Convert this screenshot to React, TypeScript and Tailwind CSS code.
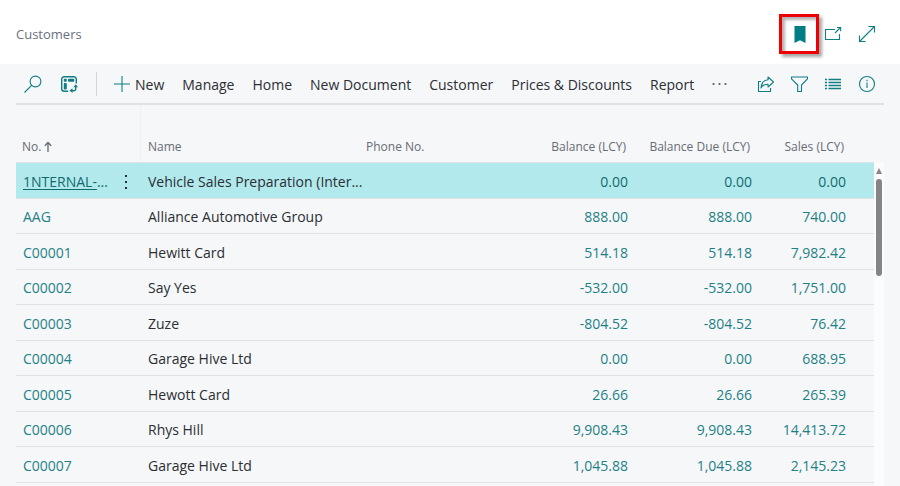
import type { ReactNode } from "react";

type Customer = {
  no: string;
  name: string;
  phone?: string;
  balance: string;
  due: string;
  sales: string;
};

const customers: Customer[] = [
  { no: "1NTERNAL-", name: "Vehicle Sales Preparation (Inter...", balance: "0.00", due: "0.00", sales: "0.00" },
  { no: "AAG", name: "Alliance Automotive Group", balance: "888.00", due: "888.00", sales: "740.00" },
  { no: "C00001", name: "Hewitt Card", balance: "514.18", due: "514.18", sales: "7,982.42" },
  { no: "C00002", name: "Say Yes", balance: "-532.00", due: "-532.00", sales: "1,751.00" },
  { no: "C00003", name: "Zuze", balance: "-804.52", due: "-804.52", sales: "76.42" },
  { no: "C00004", name: "Garage Hive Ltd", balance: "0.00", due: "0.00", sales: "688.95" },
  { no: "C00005", name: "Hewott Card", balance: "26.66", due: "26.66", sales: "265.39" },
  { no: "C00006", name: "Rhys Hill", balance: "9,908.43", due: "9,908.43", sales: "14,413.72" },
  { no: "C00007", name: "Garage Hive Ltd", balance: "1,045.88", due: "1,045.88", sales: "2,145.23" },
];

const menus = ["Manage", "Home", "New Document", "Customer", "Prices & Discounts", "Report"];

function Icon({ children }: { children: ReactNode }) {
  return (
    <svg
      viewBox="0 0 18 18"
      className="size-[18px] shrink-0"
      fill="none"
      stroke="currentColor"
      strokeWidth="1.1"
      aria-hidden="true"
    >
      {children}
    </svg>
  );
}

function IconButton({ label, children }: { label: string; children: ReactNode }) {
  return (
    <button type="button" aria-label={label} className="shrink-0 text-[#0f7f85]">
      <Icon>{children}</Icon>
    </button>
  );
}

function PageHeader() {
  return (
    <header className="flex h-16 items-center bg-white px-4 pt-1">
      <h1 className="grow pt-[2px] text-[13px] text-[#697180]">Customers</h1>
      <button
        type="button"
        aria-label="Bookmark"
        className="mr-[5px] flex size-10 items-center justify-center border-3 border-[#ee0000] text-[#007d85] shadow-[3px_3px_3px_rgba(0,0,0,0.35),inset_3px_3px_3px_rgba(0,0,0,0.3)]"
      >
        <svg viewBox="0 0 18 18" className="size-[18px]" fill="currentColor" aria-hidden="true">
          <path d="M4.5 1h11v17L10 15.2 4.5 18z" />
        </svg>
      </button>
      <div className="mr-2 flex gap-4">
        <IconButton label="Open in new window">
          <path d="M11 4.500H1.500v10h14V9" />
          <path d="M11 8l5.500-5.500M13 2.500h3.700v3.700" />
        </IconButton>
        <IconButton label="Expand">
          <path d="M1.500 16.500l15-15M10.500 1.500h6v6M1.500 10.500v6h6" />
        </IconButton>
      </div>
    </header>
  );
}

function Toolbar() {
  return (
    <div className="flex h-[41px] items-center border-b-2 border-[#dfe1e4] px-2 text-sm text-[#2b2e33]">
      <div className="flex gap-[18px]">
        <IconButton label="Search">
          <circle cx="11.500" cy="6.500" r="5.400" />
          <path d="M7.600 10.400L.5 17.500" />
        </IconButton>
        <IconButton label="Analyze">
          <path
            d="M16.300 8.500V4.200a2.500 2.500 0 0 0-2.500-2.500H4.200a2.500 2.500 0 0 0-2.500 2.500v9.600a2.500 2.500 0 0 0 2.500 2.500H8"
            strokeWidth="1.400"
          />
          <g fill="currentColor" stroke="none">
            <rect x="3.800" y="3.700" width="3" height="3" rx="1" />
            <rect x="8" y="3.700" width="6.300" height="3" rx="1" />
            <rect x="3.800" y="8" width="3" height="6.500" rx="1" />
            <path d="M15.700 9.200l2.300 3h-4.600zM9.500 15.600l3-2.300v4.600z" />
          </g>
          <path d="M15.700 11.500v2.200a2 2 0 0 1-2 2H12" strokeWidth="1.400" />
        </IconButton>
      </div>
      <span className="mr-4 ml-[18px] h-6 w-px bg-[#d3d6da]" />
      <div className="flex grow items-center gap-[18px] pt-[2px] whitespace-nowrap">
        <button type="button" className="flex items-center gap-1">
          <span className="text-[#0f7f85]">
            <Icon>
              <path d="M9 0v16M1 8h16" />
            </Icon>
          </span>
          New
        </button>
        {menus.map((menu) => (
          <button type="button" key={menu}>
            {menu}
          </button>
        ))}
        <button type="button" aria-label="More options">
          <svg viewBox="0 0 18 18" className="size-[18px]" fill="#555b63" aria-hidden="true">
            <circle cx="1.500" cy="8" r="1.100" />
            <circle cx="7.500" cy="8" r="1.100" />
            <circle cx="13.500" cy="8" r="1.100" />
          </svg>
        </button>
      </div>
      <div className="flex gap-4">
        <IconButton label="Share">
          <path d="M5 6.500H2.500v10h12V13" />
          <path d="M12 2l5.500 5-5.500 5V9.200C8.500 9 6.300 10.400 5 13c.2-4.600 2.600-7.800 7-8.200z" strokeLinejoin="round" />
        </IconButton>
        <IconButton label="Filter">
          <path d="M1.500 2h16v1.800l-6 6.200v6.500H7.700V10l-6.200-6.200z" strokeLinejoin="round" />
        </IconButton>
        <IconButton label="List view">
          <path d="M4.500 4.500H17M4.500 7.500H17M4.500 10.500H17M4.500 13.500H17M1 4.500h2M1 7.500h2M1 10.500h2M1 13.500h2" strokeWidth="1.300" />
        </IconButton>
        <IconButton label="Details">
          <circle cx="9" cy="9" r="7.500" />
          <path d="M9 7.500V13M9 4.800v1.400" />
        </IconButton>
      </div>
    </div>
  );
}

function CustomerTable() {
  return (
    <table className="w-full table-fixed border-separate border-spacing-0 text-left text-sm whitespace-nowrap">
      <colgroup>
        <col className="w-[95px]" />
        <col className="w-[30px]" />
        <col className="w-[225px]" />
        <col />
        <col className="w-[124px]" />
        <col className="w-[124px]" />
        <col className="w-[115px]" />
      </colgroup>
      <thead>
        <tr className="h-[58px] align-bottom text-xs text-[#666c74] *:border-b *:border-b-[#dfe1e4] *:pb-[7px] *:font-normal">
          <th scope="col" colSpan={2} className="border-r border-r-[#eff0f3] pl-[6px]">
            <span className="flex items-center gap-[2px]">
              No.
              <svg viewBox="0 0 10 12" className="h-3 w-[10px]" fill="none" stroke="currentColor" strokeWidth="1.300" aria-hidden="true">
                <path d="M5 11V1.500M1.800 4.700L5 1.500l3.200 3.200" />
              </svg>
            </span>
          </th>
          <th scope="col" className="pl-[7px]">Name</th>
          <th scope="col">Phone No.</th>
          <th scope="col" className="pr-[9px] text-right">Balance (LCY)</th>
          <th scope="col" className="pr-[9px] text-right">Balance Due (LCY)</th>
          <th scope="col" className="pr-[30px] text-right">Sales (LCY)</th>
        </tr>
      </thead>
      <tbody>
        {customers.map((c, i) => (
          <tr
            key={c.no}
            className={
              (i === 0 ? "bg-[#b2e9ec] text-[#12696e]" : "text-[#1d8186]") +
              " odd:h-9 even:h-[35px] *:border-b *:border-b-[#dfe1e4] *:pt-[2px]"
            }
          >
            <td className="pl-[7px]">
              <a href="#customer" className={i === 0 ? "underline underline-offset-2" : ""}>
                {c.no}
              </a>
              {i === 0 && "..."}
            </td>
            <td>
              {i === 0 && (
                <button type="button" aria-label="Show more options" className="flex w-full justify-center text-[#2b2e33]">
                  <Icon>
                    <path d="M9 2v2M9 8v2M9 14v2" strokeWidth="2" />
                  </Icon>
                </button>
              )}
            </td>
            <td className="pl-[7px] text-[#2b2e33]">{c.name}</td>
            <td>{c.phone}</td>
            <td className="pr-[7px] text-right">{c.balance}</td>
            <td className="pr-[7px] text-right">{c.due}</td>
            <td className="pr-7 text-right">{c.sales}</td>
          </tr>
        ))}
      </tbody>
    </table>
  );
}

export default function App() {
  return (
    <div className="flex min-h-screen flex-col bg-[#f6f7f9] font-['Segoe_UI','Open_Sans',sans-serif]">
      <PageHeader />
      <main className="flex grow flex-col px-4">
        <Toolbar />
        <div className="flex grow">
          <div className="min-w-0 grow">
            <CustomerTable />
          </div>
          <div className="mt-[58px] flex w-[10px] shrink-0 flex-col items-center bg-[#fcfcfc] pt-[5px]" aria-hidden="true">
            <svg viewBox="0 0 6 6" className="mb-[5px] size-[6px]" fill="#858585">
              <path d="M3 0l3 6H0z" />
            </svg>
            <div className="h-[97px] w-[6px] rounded-full bg-[#858585]" />
          </div>
        </div>
      </main>
    </div>
  );
}
